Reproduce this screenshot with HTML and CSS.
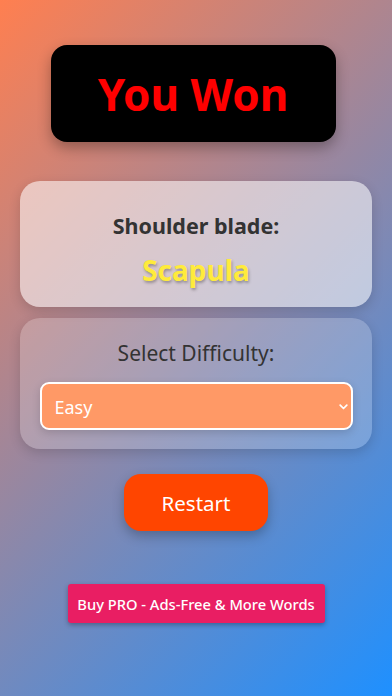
FILE: index.html
```html
<!DOCTYPE html>
<html lang="en">
<head>
<meta charset="utf-8">
<meta name="viewport" content="width=device-width, initial-scale=1">
<title>You Won</title>
<link rel="stylesheet" href="styles.css">
</head>
<body>
<main class="app">
  <div class="result-box"><h1 class="result-title">You Won</h1></div>
  <section class="card card-word">
    <p class="clue">Shoulder blade:</p>
    <p class="answer">Scapula</p>
  </section>
  <section class="card card-difficulty">
    <label class="diff-label" for="difficulty">Select Difficulty:</label>
    <div class="select-wrap">
      <select id="difficulty" class="diff-select">
        <option>Easy</option>
        <option>Medium</option>
        <option>Hard</option>
      </select>
      <svg class="chevron" width="9" height="6" viewBox="0 0 9 6"><path d="M1.2 1.2 L4.5 4.5 L7.8 1.2" fill="none" stroke="#fff" stroke-width="1.7" stroke-linecap="round" stroke-linejoin="round"/></svg>
    </div>
  </section>
  <button class="restart-btn">Restart</button>
  <button class="pro-btn">Buy PRO - Ads-Free &amp; More Words</button>
</main>
</body>
</html>
```
FILE: styles.css
```css
html, body {
  margin: 0;
  padding: 0;
}
body {
  min-height: 696px;
  background: linear-gradient(135deg, #ff7f50 0%, #1e90ff 100%);
  font-family: "Noto Sans", "Open Sans", sans-serif;
  color: #333;
}
.app {
  display: flex;
  flex-direction: column;
  align-items: center;
  padding: 45px 20px 0;
  box-sizing: border-box;
}
.result-box {
  width: 285px;
  height: 97px;
  margin-right: 6px;
  background: #000;
  border-radius: 16px;
  display: flex;
  align-items: center;
  justify-content: center;
  box-shadow: 0 6px 14px rgba(0,0,0,0.3);
}
.result-title {
  margin: 0;
  color: #ff0000;
  font-size: 44px;
  font-weight: 700;
  line-height: 54px;
}
.card {
  width: 352px;
  box-sizing: border-box;
  border-radius: 20px;
  display: flex;
  flex-direction: column;
  align-items: center;
  box-shadow: 0 4px 12px rgba(0,0,0,0.15);
}
.card-word {
  margin-top: 39px;
  height: 126px;
  background: rgba(255,255,255,0.55);
  padding-top: 29px;
}
.clue {
  margin: 0;
  font-size: 21.5px;
  font-weight: 700;
  color: #333;
  line-height: 32px;
}
.answer {
  margin: 10px 0 0;
  font-size: 28px;
  font-weight: 700;
  color: #ffeb3b;
  line-height: 36px;
  text-shadow: 1px 2px 3px rgba(0,0,0,0.3);
}
.card-difficulty {
  margin-top: 11px;
  height: 131px;
  background: rgba(255,255,255,0.2);
  padding-top: 20px;
}
.diff-label {
  font-size: 21px;
  line-height: 30px;
  color: #333;
}
.select-wrap {
  position: relative;
  margin-top: 14px;
  width: 313px;
}
.diff-select {
  appearance: none;
  -webkit-appearance: none;
  width: 100%;
  height: 48px;
  box-sizing: border-box;
  background: #ff9966;
  border: 2px solid #fff;
  border-radius: 9px;
  color: #fff;
  font-family: inherit;
  font-size: 18px;
  padding: 2px 13px 0;
  box-shadow: 0 3px 8px rgba(0,0,0,0.15);
}
.chevron {
  position: absolute;
  right: 5px;
  top: 22px;
}
.restart-btn {
  margin-top: 25px;
  width: 144px;
  height: 57px;
  background: #ff4500;
  color: #fff;
  border: none;
  border-radius: 17px;
  font-family: inherit;
  font-size: 20.5px;
  box-shadow: 0 5px 12px rgba(0,0,0,0.25);
}
.pro-btn {
  margin-top: 53px;
  width: 257px;
  height: 39px;
  background: #e91e63;
  color: #fff;
  border: none;
  border-radius: 3px;
  font-family: inherit;
  font-size: 14.7px;
  font-weight: 500;
  box-shadow: 0 2px 5px rgba(0,0,0,0.3);
}
```
